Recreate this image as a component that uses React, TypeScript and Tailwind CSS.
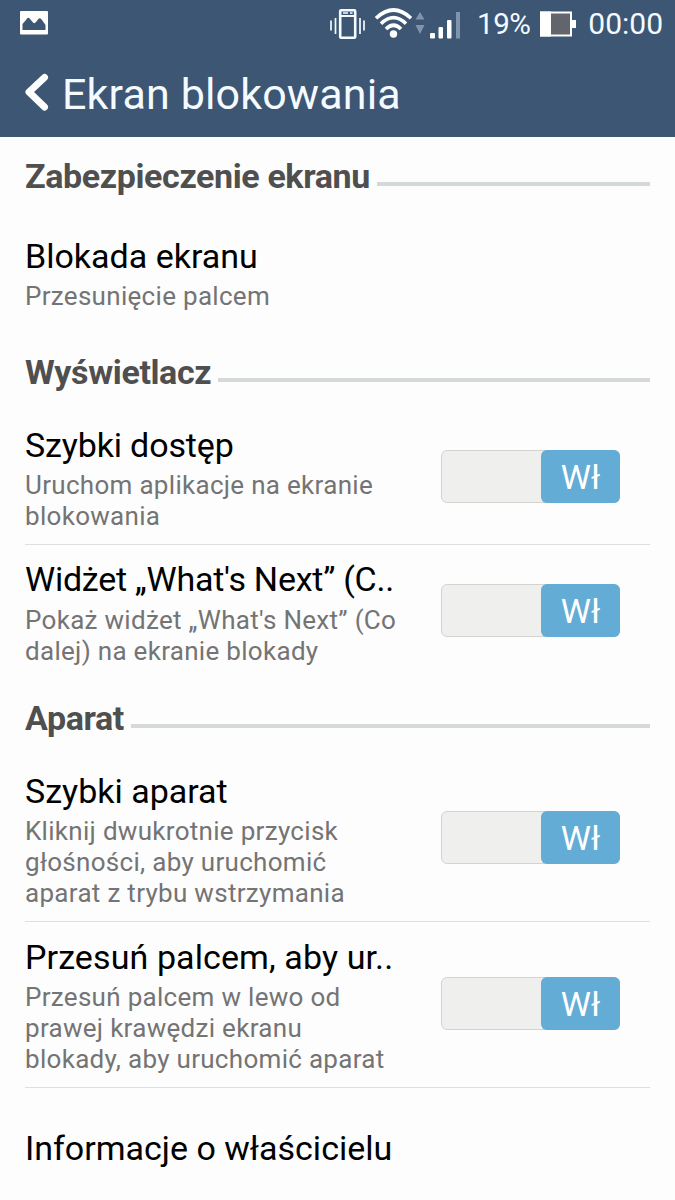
import React from "react";

interface SectionHeaderProps {
  title: string;
}

interface SettingRowProps {
  title: string;
  lines?: string[];
  hasSwitch?: boolean;
  divider?: boolean;
  className?: string;
  titleClassName?: string;
}

function StatusBar() {
  return (
    <div className="flex items-center h-[47px] pl-5 pr-3 text-[#f4faff]">
      <svg width="28" height="24" viewBox="0 0 28 24" className="mt-[-1px]">
        <rect width="28" height="23.500" rx="1" fill="#fff" />
        <path
          d="M2.500 19V13L6 9Q8 5 10 8L13 11.500Q14.500 13 16 11L18 8.500Q20 6 22 9L25.500 14V19Z"
          fill="#3c5673"
        />
      </svg>
      <svg width="146" height="47" viewBox="320 0 146 47" className="ml-[272px]">
        {/* vibrate */}
        <g stroke="#f4faff" fill="none">
          <rect x="340.200" y="10.200" width="15" height="27.500" rx="1" strokeWidth="2.600" />
          <path d="M340 16H355" strokeWidth="2" />
          <path d="M343 13H348M350 13H352.500" strokeWidth="1.500" />
          <path
            d="M331 20.500V30.500M335.500 18V34M360 18V34M364 20.500V30.500"
            strokeWidth="1.700"
          />
        </g>
        {/* wifi */}
        <g stroke="#fff" fill="none" strokeWidth="3.600">
          <path d="M376 18.200Q393.500 1.800 411 18.200" />
          <path d="M381 23.700Q393.500 11.500 406 23.700" />
          <path d="M386 29Q393.500 21.500 401 29" />
        </g>
        <circle cx="393.500" cy="34" r="3.700" fill="#fff" />
        <g fill="#8194ad">
          <path d="M415.500 19.500L420 12L424.500 19.500Z" />
          <path d="M415.500 25L420 34L424.500 25Z" />
          <rect x="456" y="12" width="4" height="26.500" />
        </g>
        <g fill="#fff">
          <rect x="430" y="33" width="5" height="5.500" rx="1" />
          <rect x="438.500" y="27" width="4.500" height="11.500" rx="1" />
          <rect x="447" y="20" width="4.500" height="18.500" rx="1" />
        </g>
      </svg>
      <span className="ml-[11px] w-[56px] pt-px text-[29.5px] whitespace-nowrap tracking-[-0.4px]">
        19%
      </span>
      <svg width="37" height="26" viewBox="0 0 37 26" className="ml-[7px]">
        <rect x="1" y="1.500" width="30" height="23" fill="#62656b" />
        <rect x="1" y="1.500" width="30" height="23" fill="none" stroke="#fff" strokeWidth="2" />
        <rect x="0" y="0.500" width="11" height="25" fill="#fff" />
        <rect x="32" y="9" width="4" height="8" fill="#fff" />
      </svg>
      <span className="ml-auto text-[30px] whitespace-nowrap">00:00</span>
    </div>
  );
}

function SectionHeader({ title }: SectionHeaderProps) {
  return (
    <div className="flex h-10">
      <h2 className="text-[34px] leading-10 font-bold tracking-[-0.38px] text-[#4f4f4f] whitespace-nowrap">
        {title}
      </h2>
      <div className="flex-1 h-1 mt-[26px] ml-[7px] bg-[#d5d9d9]" />
    </div>
  );
}

function Switch() {
  return (
    <div className="flex justify-end w-[179px] h-[53px] mb-[5px] rounded-md border border-[#d3d4d0] bg-[#efefed]">
      <span className="w-[79px] h-[53px] -m-px rounded-md bg-[#63acd5] text-white text-[34px] leading-[54px] text-center">
        Wł
      </span>
    </div>
  );
}

function SettingRow({
  title,
  lines = [],
  hasSwitch,
  divider,
  className = "",
  titleClassName = "",
}: SettingRowProps) {
  return (
    <div
      className={`flex justify-between items-center pr-[30px] ${
        divider ? "border-b border-[#dedfdf] pb-3" : ""
      } ${className}`}
    >
      <div className="whitespace-nowrap">
        <h3 className={`text-[34px] leading-10 text-black ${titleClassName}`}>
          {title}
        </h3>
        {lines.length > 0 && (
          <p className="mt-[5px] text-[26px] leading-[31px] tracking-[0.3px] text-[#747474]">
            {lines.map((line) => (
              <span key={line} className="block">
                {line}
              </span>
            ))}
          </p>
        )}
      </div>
      {hasSwitch && <Switch />}
    </div>
  );
}

function App() {
  return (
    <div className="w-[675px] h-[1200px] overflow-hidden bg-[#fdfdfd] font-['Roboto',sans-serif]">
      <header className="h-[137px] bg-[#3c5673]">
        <StatusBar />
        <div className="flex items-center h-[90px] pl-[25px]">
          <svg width="24" height="40" viewBox="0 0 24 40">
            <path
              d="M19.500 5.500L4 20L19.500 35"
              fill="none"
              stroke="#fff"
              strokeWidth="7"
              strokeLinecap="round"
              strokeLinejoin="round"
            />
          </svg>
          <h1 className="ml-[13px] pt-[3px] text-[43px] leading-[50px] tracking-[0.15px] text-[#f4faff] whitespace-nowrap">
            Ekran blokowania
          </h1>
        </div>
      </header>

      <main className="px-[25px] pt-[19px]">
        <SectionHeader title="Zabezpieczenie ekranu" />
        <SettingRow
          className="mt-10"
          title="Blokada ekranu"
          lines={["Przesunięcie palcem"]}
        />

        <div className="h-10" />
        <SectionHeader title="Wyświetlacz" />
        <SettingRow
          className="mt-[33px]"
          title="Szybki dostęp"
          titleClassName="tracking-[-0.15px]"
          lines={["Uruchom aplikacje na ekranie", "blokowania"]}
          hasSwitch
          divider
        />
        <SettingRow
          className="mt-[14px]"
          title="Widżet „What's Next” (C.."
          titleClassName="tracking-[-0.25px] pb-px"
          lines={["Pokaż widżet „What's Next” (Co", "dalej) na ekranie blokady"]}
          hasSwitch
        />

        <div className="h-[31px]" />
        <SectionHeader title="Aparat" />
        <SettingRow
          className="mt-[33px]"
          title="Szybki aparat"
          lines={[
            "Kliknij dwukrotnie przycisk",
            "głośności, aby uruchomić",
            "aparat z trybu wstrzymania",
          ]}
          hasSwitch
          divider
        />
        <SettingRow
          className="mt-[15px]"
          title="Przesuń palcem, aby ur.."
          titleClassName="tracking-[0.1px]"
          lines={[
            "Przesuń palcem w lewo od",
            "prawej krawędzi ekranu",
            "blokady, aby uruchomić aparat",
          ]}
          hasSwitch
          divider
        />
        <SettingRow className="mt-10" title="Informacje o właścicielu" />
      </main>
    </div>
  );
}

export default App;
